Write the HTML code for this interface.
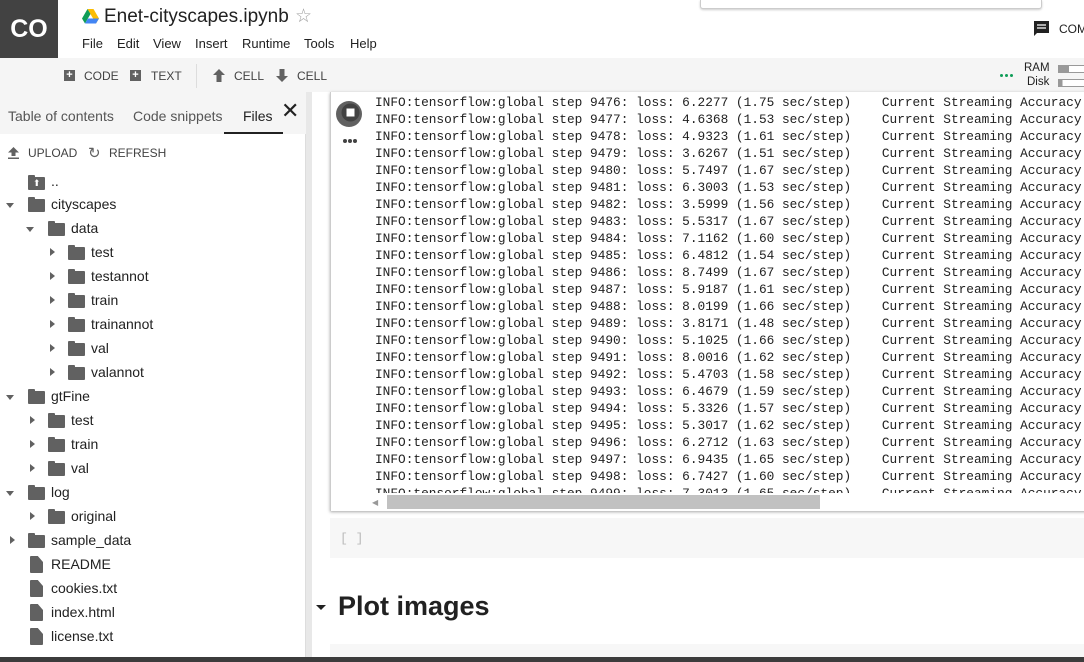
<!DOCTYPE html>
<html><head><meta charset="utf-8"><style>
*{box-sizing:border-box;margin:0;padding:0}
body{width:1084px;height:662px;overflow:hidden;background:#fff;font-family:"Liberation Sans",Arial,sans-serif;color:#212121;position:relative}
.abs{position:absolute}
.logo{left:0;top:0;width:58px;height:58px;background:#424242;color:#fff;font-weight:bold;font-size:25px;display:flex;align-items:center;justify-content:center;letter-spacing:0}
.title{left:104px;top:6px;font-size:19px;color:#212121}
.menu{top:36px;font-size:13px;color:#212121}
.toolbar{left:0;top:58px;width:1084px;height:34px;background:#f5f5f5}
.tb{top:69px;font-size:12px;color:#424242}
.side{left:0;top:92px;width:306px;height:570px;background:#fff;border-right:1px solid #ddd}
.tabs{left:0;top:92px;width:306px;height:42px;background:#f5f5f5}
.tab{top:108px;font-size:14px;color:#555}
.row{position:absolute;font-size:14px;color:#212121;height:20px;line-height:20px}
.arr-d{position:absolute;width:0;height:0;border-left:4.5px solid transparent;border-right:4.5px solid transparent;border-top:5px solid #616161}
.arr-r{position:absolute;width:0;height:0;border-top:4.5px solid transparent;border-bottom:4.5px solid transparent;border-left:5px solid #616161}
.fold{position:absolute;width:17px;height:13px;background:#616161;border-radius:1px}
.fold:before{content:"";position:absolute;left:0;top:-2px;width:7px;height:3px;background:#616161;border-radius:1px 1px 0 0}
.file{position:absolute;width:13px;height:17px;background:#616161;border-radius:1px;clip-path:polygon(0 0,60% 0,100% 35%,100% 100%,0 100%)}
.gap{left:306px;top:92px;width:6px;height:570px;background:#e8e8e8}
.out{left:330px;top:92px;width:760px;height:419px;background:#fff;box-shadow:0 1px 3px rgba(0,0,0,.35);border-left:1px solid #ccc}
pre{position:absolute;left:375px;top:94px;font-family:"Liberation Mono",monospace;font-size:12.8px;line-height:17px;color:#212121;white-space:pre;height:400px;overflow:hidden}
.dot{position:absolute;width:4px;height:4px;border-radius:50%;background:#424242}
</style></head><body>
<div class="abs logo">CO</div>
<svg class="abs" style="left:82px;top:9px" width="17" height="15" viewBox="0 0 17 15"><polygon points="5.5,0 11.5,0 17,9.5 14,14.5" fill="#fbbc04"/><polygon points="5.5,0 0,9.5 3,14.5 8.5,5" fill="#0f9d58"/><polygon points="3,14.5 14,14.5 17,9.5 6,9.5" fill="#4285f4"/></svg>
<div class="abs title">Enet-cityscapes.ipynb</div>
<div class="abs" style="left:295px;top:5px;font-size:19px;color:#9e9e9e">☆</div>
<div class="abs menu" style="left:82px">File</div><div class="abs menu" style="left:117px">Edit</div><div class="abs menu" style="left:153px">View</div><div class="abs menu" style="left:195px">Insert</div><div class="abs menu" style="left:242px">Runtime</div><div class="abs menu" style="left:304px">Tools</div><div class="abs menu" style="left:350px">Help</div>
<div class="abs" style="left:700px;top:0;width:342px;height:9px;border:1px solid #ccc;border-top:none;border-radius:0 0 3px 3px;box-shadow:0 1px 2px rgba(0,0,0,.2);background:#fff"></div>
<svg class="abs" style="left:1033px;top:20px" width="17" height="17" viewBox="0 0 17 17"><path d="M1 1h15v12H4l-3 3z" fill="#212121"/><path d="M4 5h9M4 8h9" stroke="#fff" stroke-width="1.3"/></svg>
<div class="abs" style="left:1059px;top:22px;font-size:12px;color:#212121">COM</div>
<div class="abs toolbar"></div>
<div class="abs" style="left:64px;top:70px;width:11px;height:11px;background:#616161;color:#fff;font-size:11px;line-height:11px;text-align:center;font-weight:bold">+</div>
<div class="abs tb" style="left:84px">CODE</div>
<div class="abs" style="left:130px;top:70px;width:11px;height:11px;background:#616161;color:#fff;font-size:11px;line-height:11px;text-align:center;font-weight:bold">+</div>
<div class="abs tb" style="left:151px">TEXT</div>
<div class="abs" style="left:196px;top:64px;width:1px;height:24px;background:#ddd"></div>
<svg class="abs" style="left:213px;top:69px" width="12" height="13"><path d="M6 0L12 6H8.5V13h-5V6H0z" fill="#616161"/></svg>
<div class="abs tb" style="left:234px">CELL</div>
<svg class="abs" style="left:276px;top:69px" width="12" height="13"><path d="M6 13L12 7H8.5V0h-5V7H0z" fill="#616161"/></svg>
<div class="abs tb" style="left:297px">CELL</div>
<div class="dot" style="left:1000px;top:74px;background:#0f9d58;width:3px;height:3px"></div><div class="dot" style="left:1005px;top:74px;background:#0f9d58;width:3px;height:3px"></div><div class="dot" style="left:1010px;top:74px;background:#0f9d58;width:3px;height:3px"></div>
<div class="abs" style="left:1024px;top:62px;font-size:11.5px;color:#212121">RAM</div>
<div class="abs" style="left:1027px;top:76px;font-size:11.5px;color:#212121">Disk</div>
<div class="abs" style="left:1058px;top:65px;width:30px;height:8px;border:1px solid #999;background:linear-gradient(90deg,#999 35%,#fff 35%)"></div>
<div class="abs" style="left:1058px;top:79px;width:30px;height:8px;border:1px solid #999;background:linear-gradient(90deg,#999 12%,#fff 12%)"></div>

<div class="abs side"></div>
<div class="abs tabs"></div>
<div class="abs tab" style="left:8px">Table of contents</div>
<div class="abs tab" style="left:133px">Code snippets</div>
<div class="abs tab" style="left:243px;color:#212121">Files</div>
<div class="abs" style="left:224px;top:132px;width:59px;height:2px;background:#212121"></div>
<div class="abs" style="left:281px;top:100px;font-size:22px;line-height:22px;color:#212121">✕</div>
<svg class="abs" style="left:8px;top:147px" width="11" height="12"><path d="M5.5 0L11 5.5H7.5V9h-4V5.5H0z M0 10.5h11V12H0z" fill="#616161"/></svg>
<div class="abs" style="left:28px;top:146px;font-size:12px;color:#424242">UPLOAD</div>
<div class="abs" style="left:88px;top:144px;font-size:15px;color:#616161">↻</div>
<div class="abs" style="left:109px;top:146px;font-size:12px;color:#424242">REFRESH</div>

<div class="fold" style="left:28px;top:177px"></div><div class="abs" style="left:33px;top:178px;color:#fff;font-size:9px">⬆</div><div class="row" style="left:51px;top:171px">..</div>
<div class="arr-d" style="left:6px;top:203px"></div><div class="fold" style="left:28px;top:199px"></div><div class="row" style="left:51px;top:194px">cityscapes</div>
<div class="arr-d" style="left:26px;top:227px"></div><div class="fold" style="left:48px;top:223px"></div><div class="row" style="left:71px;top:218px">data</div>
<div class="arr-r" style="left:50px;top:248px"></div><div class="fold" style="left:68px;top:247px"></div><div class="row" style="left:91px;top:242px">test</div>
<div class="arr-r" style="left:50px;top:272px"></div><div class="fold" style="left:68px;top:271px"></div><div class="row" style="left:91px;top:266px">testannot</div>
<div class="arr-r" style="left:50px;top:296px"></div><div class="fold" style="left:68px;top:295px"></div><div class="row" style="left:91px;top:290px">train</div>
<div class="arr-r" style="left:50px;top:320px"></div><div class="fold" style="left:68px;top:319px"></div><div class="row" style="left:91px;top:314px">trainannot</div>
<div class="arr-r" style="left:50px;top:344px"></div><div class="fold" style="left:68px;top:343px"></div><div class="row" style="left:91px;top:338px">val</div>
<div class="arr-r" style="left:50px;top:368px"></div><div class="fold" style="left:68px;top:367px"></div><div class="row" style="left:91px;top:362px">valannot</div>
<div class="arr-d" style="left:6px;top:395px"></div><div class="fold" style="left:28px;top:391px"></div><div class="row" style="left:51px;top:386px">gtFine</div>
<div class="arr-r" style="left:30px;top:416px"></div><div class="fold" style="left:48px;top:415px"></div><div class="row" style="left:71px;top:410px">test</div>
<div class="arr-r" style="left:30px;top:440px"></div><div class="fold" style="left:48px;top:439px"></div><div class="row" style="left:71px;top:434px">train</div>
<div class="arr-r" style="left:30px;top:464px"></div><div class="fold" style="left:48px;top:463px"></div><div class="row" style="left:71px;top:458px">val</div>
<div class="arr-d" style="left:6px;top:491px"></div><div class="fold" style="left:28px;top:487px"></div><div class="row" style="left:51px;top:482px">log</div>
<div class="arr-r" style="left:30px;top:512px"></div><div class="fold" style="left:48px;top:511px"></div><div class="row" style="left:71px;top:506px">original</div>
<div class="arr-r" style="left:10px;top:536px"></div><div class="fold" style="left:28px;top:535px"></div><div class="row" style="left:51px;top:530px">sample_data</div>
<div class="file" style="left:30px;top:556px"></div><div class="row" style="left:51px;top:554px">README</div>
<div class="file" style="left:30px;top:580px"></div><div class="row" style="left:51px;top:578px">cookies.txt</div>
<div class="file" style="left:30px;top:604px"></div><div class="row" style="left:51px;top:602px">index.html</div>
<div class="file" style="left:30px;top:628px"></div><div class="row" style="left:51px;top:626px">license.txt</div>

<div class="abs gap"></div>
<div class="abs out"></div>
<svg class="abs" style="left:335px;top:100px" width="28" height="28" viewBox="0 0 28 28"><circle cx="14" cy="14" r="13" fill="#616161"/><circle cx="15.5" cy="12.5" r="9" fill="#424242"/><rect x="11.5" y="8.5" width="8" height="8" fill="#fff"/></svg>
<div class="dot" style="left:343px;top:139px"></div><div class="dot" style="left:348px;top:139px"></div><div class="dot" style="left:353px;top:139px"></div>
<pre>INFO:tensorflow:global step 9476: loss: 6.2277 (1.75 sec/step)    Current Streaming Accuracy
INFO:tensorflow:global step 9477: loss: 4.6368 (1.53 sec/step)    Current Streaming Accuracy
INFO:tensorflow:global step 9478: loss: 4.9323 (1.61 sec/step)    Current Streaming Accuracy
INFO:tensorflow:global step 9479: loss: 3.6267 (1.51 sec/step)    Current Streaming Accuracy
INFO:tensorflow:global step 9480: loss: 5.7497 (1.67 sec/step)    Current Streaming Accuracy
INFO:tensorflow:global step 9481: loss: 6.3003 (1.53 sec/step)    Current Streaming Accuracy
INFO:tensorflow:global step 9482: loss: 3.5999 (1.56 sec/step)    Current Streaming Accuracy
INFO:tensorflow:global step 9483: loss: 5.5317 (1.67 sec/step)    Current Streaming Accuracy
INFO:tensorflow:global step 9484: loss: 7.1162 (1.60 sec/step)    Current Streaming Accuracy
INFO:tensorflow:global step 9485: loss: 6.4812 (1.54 sec/step)    Current Streaming Accuracy
INFO:tensorflow:global step 9486: loss: 8.7499 (1.67 sec/step)    Current Streaming Accuracy
INFO:tensorflow:global step 9487: loss: 5.9187 (1.61 sec/step)    Current Streaming Accuracy
INFO:tensorflow:global step 9488: loss: 8.0199 (1.66 sec/step)    Current Streaming Accuracy
INFO:tensorflow:global step 9489: loss: 3.8171 (1.48 sec/step)    Current Streaming Accuracy
INFO:tensorflow:global step 9490: loss: 5.1025 (1.66 sec/step)    Current Streaming Accuracy
INFO:tensorflow:global step 9491: loss: 8.0016 (1.62 sec/step)    Current Streaming Accuracy
INFO:tensorflow:global step 9492: loss: 5.4703 (1.58 sec/step)    Current Streaming Accuracy
INFO:tensorflow:global step 9493: loss: 6.4679 (1.59 sec/step)    Current Streaming Accuracy
INFO:tensorflow:global step 9494: loss: 5.3326 (1.57 sec/step)    Current Streaming Accuracy
INFO:tensorflow:global step 9495: loss: 5.3017 (1.62 sec/step)    Current Streaming Accuracy
INFO:tensorflow:global step 9496: loss: 6.2712 (1.63 sec/step)    Current Streaming Accuracy
INFO:tensorflow:global step 9497: loss: 6.9435 (1.65 sec/step)    Current Streaming Accuracy
INFO:tensorflow:global step 9498: loss: 6.7427 (1.60 sec/step)    Current Streaming Accuracy
INFO:tensorflow:global step 9499: loss: 7.3013 (1.65 sec/step)    Current Streaming Accuracy</pre>
<div class="abs" style="left:370px;top:493px;width:714px;height:17px;background:#fff"></div>
<div class="abs" style="left:372px;top:498px;font-size:8px;color:#999">◀</div>
<div class="abs" style="left:387px;top:495px;width:433px;height:14px;background:#c1c1c1"></div>
<div class="abs" style="left:330px;top:518px;width:754px;height:40px;background:#f7f7f7"></div>
<div class="abs" style="left:340px;top:531px;font-family:'Liberation Mono',monospace;font-size:13px;color:#bbb">[ ]</div>
<div class="arr-d" style="left:316px;top:605px;border-left-width:5px;border-right-width:5px;border-top-width:5px;border-top-color:#212121"></div>
<div class="abs" style="left:338px;top:591px;font-size:27px;font-weight:bold;color:#212121">Plot images</div>
<div class="abs" style="left:330px;top:644px;width:754px;height:14px;background:#f7f7f7"></div>
<div class="abs" style="left:0;top:657px;width:1084px;height:5px;background:#3c3c3c"></div>
</body></html>
